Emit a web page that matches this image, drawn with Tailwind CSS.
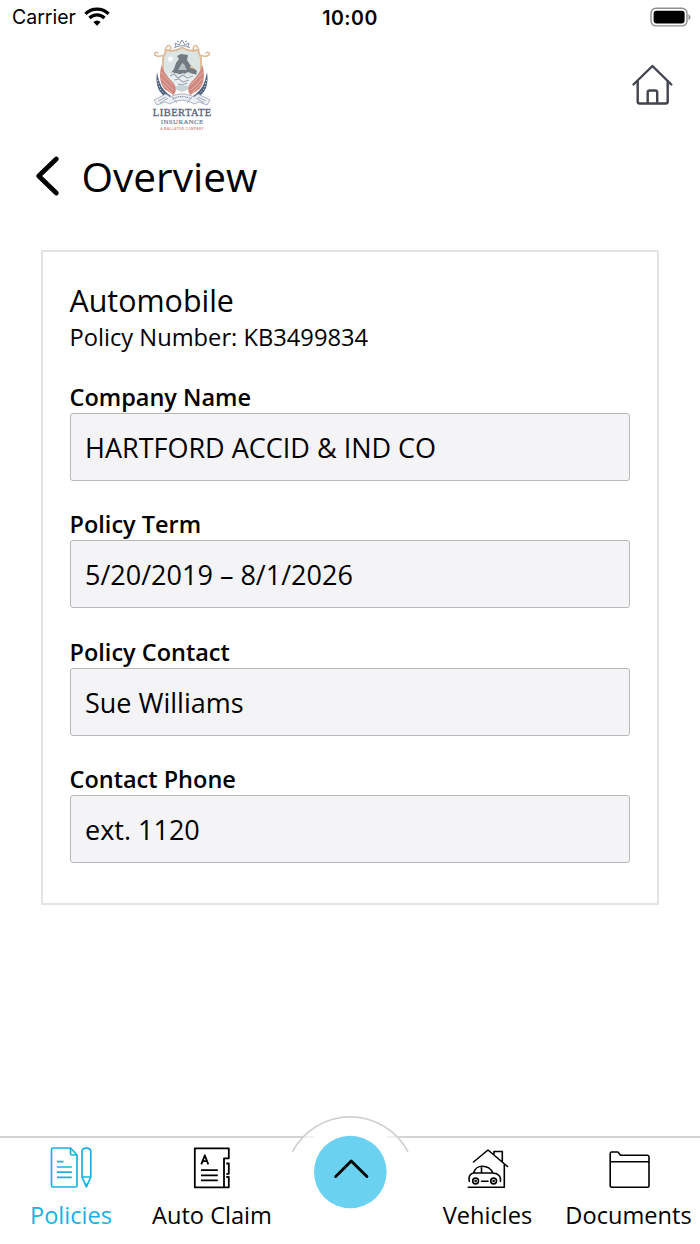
<!DOCTYPE html>
<html lang="en">
<head>
  <meta charset="UTF-8" />
  <meta name="viewport" content="width=device-width, initial-scale=1.0" />
  <title>Policy Overview</title>
  <script src="https://cdn.jsdelivr.net/npm/@tailwindcss/browser@4"></script>
</head>
<body class="bg-white text-black font-['Open_Sans',sans-serif]">
  <div class="w-[700px] h-[1244px] flex flex-col overflow-hidden">

    <!-- Status bar -->
    <div class="h-9 shrink-0 grid grid-cols-3 items-center pl-3 pr-2 font-[Inter,sans-serif] leading-[34px]">
      <div class="flex items-center gap-2 pb-0.5">
        <span class="text-[19.5px]">Carrier</span>
        <svg class="w-[26px] h-[20px]" viewBox="0 0 26 20" fill="none" stroke="#000" stroke-width="3.2">
          <path d="M1.4 6.800a16.500 16.500 0 0 1 23.200 0" />
          <path d="M5.500 11a10.600 10.600 0 0 1 15 0" />
          <path d="M13 18.800l-3.700-3.700a5.200 5.200 0 0 1 7.400 0z" fill="#000" stroke="none" />
        </svg>
      </div>
      <div class="text-center text-[19.5px] font-semibold tracking-[0.5px] pr-1 pb-px">10:00</div>
      <svg class="w-[42px] h-[20px] justify-self-end mb-0.5" viewBox="0 0 42 20">
        <rect x="1" y="1.3" width="36" height="17.6" rx="5" fill="none" stroke="#8e8e8e" stroke-width="1.4" />
        <rect x="3.6" y="3.8" width="31" height="12.6" rx="2.8" />
        <path d="M38.500 7.200c2.600.8 2.600 5.200 0 6z" fill="#8e8e8e" />
      </svg>
    </div>

    <!-- Logo and home -->
    <header class="h-[98px] shrink-0 flex justify-between items-start pl-[150px] pr-[27px]">
      <svg class="w-[64px] h-[98px]" viewBox="150 36 64 98" fill="none">
        <!-- crown -->
        <path d="M176 47l-1-4 4 2 3-5 3 5 4-2-1 4M174 48c5-3 11-3 16 0M179 42l-2-1M185 42l2-1" stroke="#8795ab" stroke-width="1" />
        <!-- crescent behind the wings -->
        <path d="M157 72c-2 12 1 22 12 27l2-3c-8-5-12-12-14-24zM207 72c2 12-1 22-12 27l-2-3c8-5 12-12 14-24z" fill="#53657f" />
        <path d="M157.500 80l2.500 9 7 8M206.500 80l-2.500 9-7 8" stroke="#dfe5ec" stroke-width="1" stroke-dasharray="1 2.200" />
        <!-- shield -->
        <path d="M165.500 50c6 2 11 1 16.500-2.500 5.500 3.500 10.500 4.500 16.500 2.500-.5 4 2.500 5 2.500 9v12c0 9-9 16-19 20-10-4-19-11-19-20V59c0-4 3-5 2.500-9z" fill="#dbe6e4" stroke="#dfb996" stroke-width="1.800" />
        <path d="M163 55.500c-5 1.500-8.500.5-8.500-1.500s3-2.500 4-.5M201 55.500c5 1.500 8.500.5 8.500-1.500s-3-2.500-4-.5M165.500 50c.5-4 3.500-6 5-3s-2 4-3.500 2.500M198.500 50c-.5-4-3.500-6-5-3s2 4 3.500 2.500" stroke="#dfb996" stroke-width="1.500" />
        <path d="M170.500 55.500l1 2.200 2.500.3-1.900 1.600.5 2.500-2.100-1.300-2.200 1.300.5-2.500-1.800-1.600 2.500-.3z" fill="#fff" />
        <path d="M177 56l4-2 7 1-1 5 4 6 6 5-1 4-8-3-6 3-6-2-6 1 4-5 2-6 3-4z" fill="#727a84" />
        <path d="M182 63l-4 7h9l-3-6z" fill="#b4bfc2" />
        <path d="M191 65l5 4-6-1" fill="#e6c99d" />
        <path d="M168 74l5-2 4 4 6-3 4 3 8-2 2 5-6 8H174l-6-6z" fill="#e9eef0" />
        <path d="M170 76l4-2 4 4 5-3 4 3 6-2M174 80l5-1 4 3 6-2M178 84l4 1 5-2" stroke="#98a5b3" stroke-width="1.100" />
        <path d="M175 87c4-2.500 10-2.500 14 0l-3 4h-8z" fill="#c8d4d9" />
        <!-- wings -->
        <path d="M161.500 65c-3 12-1 19 3 24l9 6c3-3 3-8 0-12s-9-8-12-18zM202.500 65c3 12 1 19-3 24l-9 6c-3-3-3-8 0-12s9-8 12-18z" fill="#d0897f" />
        <path d="M161 72l12 13M161 78l12 12M163 84l9 9M203 72l-12 13M203 78l-12 12M201 84l-9 9" stroke="#e6bab3" stroke-width=".8" />
        <!-- ribbon -->
        <path d="M154 100l12-6 4 3c8-4 16-4 24 0l4-3 12 6-3 5-8-3-5 2c-8-5-16-5-24 0l-5-2-8 3z" fill="#eef0f4" stroke="#98a3b5" stroke-width=".8" />
        <path d="M158 101l8-4M160 103l8-5M206 101l-8-4M204 103l-8-5M172 97l5 6M192 97l-5 6" stroke="#98a3b5" stroke-width=".9" />
        <path d="M173 98.500c6-2.500 12-2.500 18 0" stroke="#77859c" stroke-width="1.200" stroke-dasharray="1 .8" />
        <text x="182" y="116.200" text-anchor="middle" textLength="58.500" font-family="Liberation Serif, serif" font-size="10.500" fill="#56647c" stroke="#56647c" stroke-width=".3">LIBERTATE</text>
        <text x="182" y="124.200" text-anchor="middle" textLength="42.500" font-family="Liberation Serif, serif" font-size="6.800" fill="#6f7b90" stroke="#6f7b90" stroke-width=".2">INSURANCE</text>
        <text x="182" y="129.700" text-anchor="middle" textLength="43.500" font-family="Liberation Sans, sans-serif" font-size="3.400" font-weight="700" fill="#d59790">A BALLATOR COMPANY</text>
      </svg>
      <svg class="w-[42px] h-[44px] mt-[27px]" viewBox="631 63 42 44" fill="none" stroke="#42444f" stroke-width="2.400" stroke-linecap="round" stroke-linejoin="round">
        <path d="M633.500 84.500L652.400 66l18.900 18.500" />
        <path d="M637.700 81.500v20a2 2 0 0 0 2 2h26a2 2 0 0 0 2-2v-20" />
        <path d="M647.700 103v-10.500a2 2 0 0 1 2-2h5.500a2 2 0 0 1 2 2V103" />
      </svg>
    </header>

    <!-- Page title -->
    <div class="h-[116px] shrink-0 flex items-start pl-[35px] pt-[13px]">
      <svg class="w-[26px] h-[42px] mt-[8px]" viewBox="35 155 26 42" fill="none" stroke="#000" stroke-width="4.800" stroke-linecap="round" stroke-linejoin="round">
        <path d="M56.300 159L38.700 176l17.600 17" />
      </svg>
      <h1 class="ml-[20.5px] text-[40.6px] leading-[59px]">Overview</h1>
    </div>

    <!-- Policy card -->
    <main class="mx-[41px] h-[655px] shrink-0 border-2 border-[#e3e3e4] pl-[26.5px] pr-[27px] pt-[28px]">
      <h2 class="text-[30.4px] leading-[42px]">Automobile</h2>
      <p class="-mt-0.5 text-[23.7px] leading-[34px]">Policy Number: KB3499834</p>
      <div class="mt-[27px] flex flex-col gap-[27.3px]">
        <div>
          <div class="text-[23.5px] leading-8 font-semibold">Company Name</div>
          <div class="h-[68px] border border-[#b8b8ba] rounded-[3px] bg-[#f4f4f7] pl-[14.5px] text-[27px] leading-[67px]">HARTFORD ACCID &amp; IND CO</div>
        </div>
        <div>
          <div class="text-[23.5px] leading-8 font-semibold">Policy Term</div>
          <div class="h-[68px] border border-[#b8b8ba] rounded-[3px] bg-[#f4f4f7] pl-[14.5px] text-[27px] leading-[67px]">5/20/2019 – 8/1/2026</div>
        </div>
        <div>
          <div class="text-[23.5px] leading-8 font-semibold">Policy Contact</div>
          <div class="h-[68px] border border-[#b8b8ba] rounded-[3px] bg-[#f4f4f7] pl-[14.5px] text-[27px] leading-[67px]">Sue Williams</div>
        </div>
        <div>
          <div class="text-[23.5px] leading-8 font-semibold">Contact Phone</div>
          <div class="h-[68px] border border-[#b8b8ba] rounded-[3px] bg-[#f4f4f7] pl-[14.5px] text-[27px] leading-[67px]">ext. 1120</div>
        </div>
      </div>
    </main>

    <!-- Bottom navigation -->
    <nav class="relative mt-auto h-[108px] shrink-0 border-t-2 border-[#d4d4d4] grid grid-cols-[142px_140px_136px_139px_143px] text-[23.6px] leading-[34px] text-center whitespace-nowrap">
      <div class="flex flex-col items-center pt-[7px] text-[#17b1e4]">
        <svg class="w-[44px] h-[46px]" viewBox="49 1145 44 46" fill="none" stroke="currentColor" stroke-width="1.700" stroke-linejoin="round">
          <path d="M70.500 1148H53a1.500 1.500 0 0 0-1.500 1.500v36a1.500 1.500 0 0 0 1.500 1.500h22.500a1.500 1.500 0 0 0 1.500-1.500V1155z" />
          <path d="M70.500 1148v5.500a1.500 1.500 0 0 0 1.500 1.500h5M57 1161.700h6.500M57 1167h14.800M57 1172.200h14.800M57 1177.400h14.800" />
          <path d="M82 1177v-25.500c0-4.600 8.800-4.600 8.800 0V1177l-4.400 9.800zM82 1177h8.800" />
          <path d="M84.500 1183.500l1.900 3.500 1.900-3.500z" fill="currentColor" stroke="none" />
        </svg>
        <span class="mt-[7px]">Policies</span>
      </div>
      <div class="flex flex-col items-center pt-[7px]">
        <svg class="w-[44px] h-[46px]" viewBox="190 1145 44 46" fill="none" stroke="currentColor" stroke-width="1.800" stroke-linejoin="round">
          <path d="M194.800 1148.300h34v10H224v29h-29.200zM226.300 1163.500h2.500v10.300h-2.500M226.300 1177h2.500v10.300h-5" />
          <path d="M201.300 1164.300l3.500-9 3.500 9M202.500 1161.200h4.600" />
          <path d="M201 1170.200h16.800M201 1175.300h16.800M201 1180.400h16.800" />
        </svg>
        <span class="mt-[7px]">Auto Claim</span>
      </div>
      <div class="relative">
        <!-- raised bump behind the menu button -->
        <svg class="absolute left-[2px] -top-[25px] w-[132px] h-[100px]" viewBox="284 1113 132 100" fill="none">
          <path d="M292.500 1151.800a65.200 65.200 0 0 1 115.500 0V1160H292.500z" fill="#fff" />
          <path d="M302 1137h12M387 1137h12" stroke="#ececec" stroke-width="1.500" />
          <path d="M292.500 1151.800a65.200 65.200 0 0 1 115.500 0" stroke="#d0d0d0" stroke-width="1.600" />
          <circle cx="350.300" cy="1172" r="36.300" fill="#6ad1f1" />
          <path d="M335.700 1176.500l15.500-15.500 15.700 15.500" stroke="#000" stroke-width="2.900" stroke-linecap="round" stroke-linejoin="round" />
        </svg>
      </div>
      <div class="flex flex-col items-center pt-[7px]">
        <svg class="w-[44px] h-[46px]" viewBox="466 1145 44 46" fill="none" stroke="currentColor" stroke-width="1.600" stroke-linecap="round" stroke-linejoin="round">
          <path d="M473.500 1162l14.500-12 19.500 16.500M494 1151.500h8.300v10.200M494 1151.500v2.500M504.300 1164v23.200h-36" />
          <path d="M469.300 1181.200c-1.300-4.300 1-7.700 4.200-8.200 1.800-5 4-6.800 9-6.800 5.300 0 8.300 2.300 10.500 6.800 5.300.4 8.300 3.500 7.500 8.200M473.500 1173H493M481.500 1166.200v6.800M481.500 1181.200h6.500" />
          <circle cx="475.600" cy="1181" r="2.900" />
          <circle cx="493.600" cy="1181" r="2.900" />
          <circle cx="475.600" cy="1181" r=".5" />
          <circle cx="493.600" cy="1181" r=".5" />
        </svg>
        <span class="mt-[7px]">Vehicles</span>
      </div>
      <div class="flex flex-col items-center pt-[7px]">
        <svg class="w-[44px] h-[46px]" viewBox="607 1145 44 46" fill="none" stroke="currentColor" stroke-width="1.600" stroke-linejoin="round">
          <path d="M610.200 1185.500v-32a1.500 1.500 0 0 1 1.500-1.500h5.800c2 0 1.500 3.300 3.800 3.300h26a1.700 1.700 0 0 1 1.700 1.700v28.500a1.700 1.700 0 0 1-1.700 1.700h-35.400a1.700 1.700 0 0 1-1.700-1.700zM610.200 1161.800H649" />
        </svg>
        <span class="mt-[7px]">Documents</span>
      </div>
    </nav>
  </div>
</body>
</html>
